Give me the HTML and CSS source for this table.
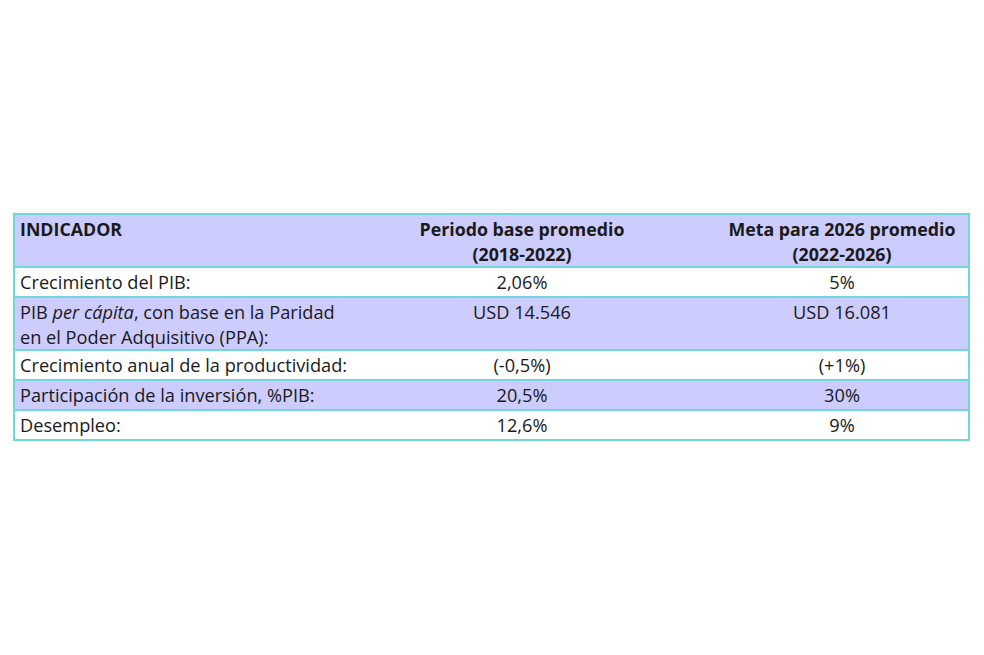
FILE: index.html
```html
<!DOCTYPE html>
<html lang="es">
<head>
<meta charset="utf-8">
<title>Indicadores</title>
<link rel="stylesheet" href="styles.css">
</head>
<body>
<div class="page">
  <table class="indicadores">
    <colgroup>
      <col class="c1"><col class="c2"><col class="c3">
    </colgroup>
    <tr class="shade double head">
      <td class="label">INDICADOR</td>
      <td class="val">Periodo base promedio<br>(2018-2022)</td>
      <td class="val">Meta para 2026 promedio<br>(2022-2026)</td>
    </tr>
    <tr class="single">
      <td class="label">Crecimiento del PIB:</td>
      <td class="val">2,06%</td>
      <td class="val">5%</td>
    </tr>
    <tr class="shade double">
      <td class="label">PIB <em>per cápita</em>, con base en la Paridad<br>en el Poder Adquisitivo (PPA):</td>
      <td class="val">USD 14.546</td>
      <td class="val">USD 16.081</td>
    </tr>
    <tr class="single">
      <td class="label">Crecimiento anual de la productividad:</td>
      <td class="val">(-0,5%)</td>
      <td class="val">(+1%)</td>
    </tr>
    <tr class="shade single">
      <td class="label">Participación de la inversión, %PIB:</td>
      <td class="val">20,5%</td>
      <td class="val">30%</td>
    </tr>
    <tr class="single last">
      <td class="label">Desempleo:</td>
      <td class="val">12,6%</td>
      <td class="val">9%</td>
    </tr>
  </table>
</div>
</body>
</html>
```

FILE: styles.css
```css
html, body {
  margin: 0;
  padding: 0;
  background: #ffffff;
}

.page {
  padding: 213px 0 0 13px;
}

.indicadores {
  border-collapse: collapse;
  table-layout: fixed;
  width: 955px;
  font-family: "Open Sans", "Noto Sans", sans-serif;
  font-size: 18.2px;
  color: #1a1a1a;
  border-left: 2px solid #6fd8dc;
  border-right: 2px solid #6fd8dc;
}

.c1 { width: 314px; }
.c2 { width: 388px; }
.c3 { width: 253px; }

.indicadores tr {
  border-top: 2px solid #6fd8dc;
}

.indicadores tr.last {
  border-bottom: 2px solid #6fd8dc;
}

.shade td {
  background: #ccccff;
}

.single { height: 30px; }
.double { height: 53px; }

.indicadores td {
  padding: 2px 5px 0 5px;
  line-height: 24.5px;
  vertical-align: top;
}

.label {
  text-align: left;
  white-space: nowrap;
  overflow: visible;
}

.val {
  text-align: center;
}

.head td {
  font-weight: 700;
  font-size: 17.8px;
}

em {
  font-style: italic;
}
```
